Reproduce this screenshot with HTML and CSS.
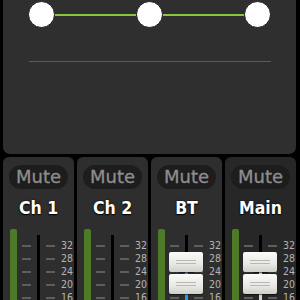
FILE: index.html
```html
<!DOCTYPE html>
<html>
<head>
<meta charset="utf-8">
<link rel="stylesheet" href="styles.css">
</head>
<body>
<div class="panel">
  <div class="nodes">
    <div class="node"></div>
    <div class="link"></div>
    <div class="node"></div>
    <div class="link"></div>
    <div class="node"></div>
  </div>
  <div class="rule"></div>
</div>
<div class="strips">
  <div class="strip">
    <div class="mute">Mute</div>
    <div class="name">Ch 1</div>
    <div class="fader">
      <div class="meter"></div>
      <div class="ticks"><i></i><i></i><i></i><i></i><i></i></div>
      <div class="track"></div>
      <div class="ticks"><i></i><i></i><i></i><i></i><i></i></div>
      <div class="scale"><span>32</span><span>28</span><span>24</span><span>20</span><span>16</span></div>
    </div>
  </div>
  <div class="strip">
    <div class="mute">Mute</div>
    <div class="name">Ch 2</div>
    <div class="fader">
      <div class="meter"></div>
      <div class="ticks"><i></i><i></i><i></i><i></i><i></i></div>
      <div class="track"></div>
      <div class="ticks"><i></i><i></i><i></i><i></i><i></i></div>
      <div class="scale"><span>32</span><span>28</span><span>24</span><span>20</span><span>16</span></div>
    </div>
  </div>
  <div class="strip">
    <div class="mute">Mute</div>
    <div class="name">BT</div>
    <div class="fader">
      <div class="meter"></div>
      <div class="ticks"><i></i><i></i><i></i><i></i><i></i></div>
      <div class="track track-blue"></div>
      <div class="ticks"><i></i><i></i><i></i><i></i><i></i></div>
      <div class="scale"><span>32</span><span>28</span><span>24</span><span>20</span><span>16</span></div>
      <div class="caps"><div class="cap"></div><div class="cap"></div></div>
    </div>
  </div>
  <div class="strip strip-main">
    <div class="mute">Mute</div>
    <div class="name">Main</div>
    <div class="fader">
      <div class="meter"></div>
      <div class="ticks"><i></i><i></i><i></i><i></i><i></i></div>
      <div class="track track-gray"></div>
      <div class="ticks"><i></i><i></i><i></i><i></i><i></i></div>
      <div class="scale"><span>32</span><span>28</span><span>24</span><span>20</span><span>16</span></div>
      <div class="caps"><div class="cap"></div><div class="cap"></div></div>
    </div>
  </div>
</div>
</body>
</html>
```
FILE: styles.css
```css
html, body {
  margin: 0;
  padding: 0;
  background: #000;
  width: 300px;
  height: 300px;
  overflow: hidden;
  font-family: "DejaVu Sans Condensed", "DejaVu Sans", sans-serif;
  font-stretch: condensed;
}
.panel {
  margin: 0 4px 0 3px;
  height: 154px;
  background: #2f2f2f;
  border-radius: 0 0 7px 7px;
  overflow: hidden;
}
.nodes {
  display: flex;
  align-items: center;
  padding: 1px 0 0 25px;
}
.node {
  flex: none;
  width: 25px;
  height: 25px;
  border-radius: 50%;
  background: #fff;
  border: 1px solid #1a1a1a;
}
.link {
  flex: none;
  width: 81px;
  height: 2px;
  background: #8cc63e;
}
.rule {
  margin: 33px 25px 0 26px;
  height: 1px;
  background: #5a5a5a;
}
.strips {
  display: flex;
  gap: 3px;
  margin: 3px 4px 0 3px;
}
.strip {
  flex: 1 1 0;
  height: 143px;
  overflow: hidden;
  background: #2e2e2e;
  border-radius: 6px 6px 0 0;
  padding-top: 8px;
  box-sizing: border-box;
}
.strip-main {
  background: #272727;
}
.mute {
  margin: 0 6px;
  height: 24px;
  border-radius: 12px;
  background: #1d1d1d;
  color: #8e8e8e;
  font-family: "DejaVu Sans", sans-serif;
  font-stretch: normal;
  font-size: 18px;
  line-height: 24px;
  text-align: center;
  -webkit-text-stroke: 0.3px #8e8e8e;
}
.name {
  margin-top: 8px;
  height: 22px;
  line-height: 22px;
  color: #fff;
  font-weight: bold;
  font-size: 17.5px;
  text-align: center;
  text-shadow: 0 1px 1px #000, 0 0 2px #000;
}
.fader {
  position: relative;
  display: flex;
  margin-top: 10px;
  height: 80px;
}
.meter {
  flex: none;
  margin-left: 7px;
  width: 7px;
  background: #4e7a28;
  border-radius: 2px 2px 0 0;
}
.ticks {
  flex: none;
  width: 9px;
  margin-left: 5px;
  padding-top: 10px;
  display: flex;
  flex-direction: column;
}
.ticks + .track + .ticks {
  margin-left: 6px;
}
.ticks i {
  display: flex;
  align-items: center;
  height: 13px;
}
.ticks i::before {
  content: "";
  display: block;
  width: 100%;
  height: 2px;
  background: #5e5e5e;
}
.track {
  flex: none;
  margin: 6px 0 0 6px;
  width: 3px;
  background: #000;
}
.track-blue {
  background: linear-gradient(#000 0 17px, #1aa2e6 17px);
}
.track-gray {
  background: linear-gradient(#000 0 17px, #d4d4d4 17px);
}
.scale {
  flex: none;
  margin-left: 6px;
  padding-top: 10px;
  display: flex;
  flex-direction: column;
  color: #b4b4b4;
  font-size: 10.5px;
}
.scale span {
  height: 13px;
  line-height: 13px;
}
.caps {
  position: absolute;
  left: 18px;
  top: 23px;
  width: 34px;
  display: flex;
  flex-direction: column;
  gap: 2px;
}
.cap {
  height: 20px;
  border-radius: 2px;
  background: linear-gradient(#fbfbf8, #e8e8e4 60%, #cfcfca);
  box-shadow: 0 1px 1px #0008;
  display: flex;
  flex-direction: column;
  justify-content: center;
  align-items: center;
  gap: 2px;
}
.cap::before, .cap::after {
  content: "";
  display: block;
  width: 20px;
  height: 1px;
  background: #b8b8b4;
}
```
